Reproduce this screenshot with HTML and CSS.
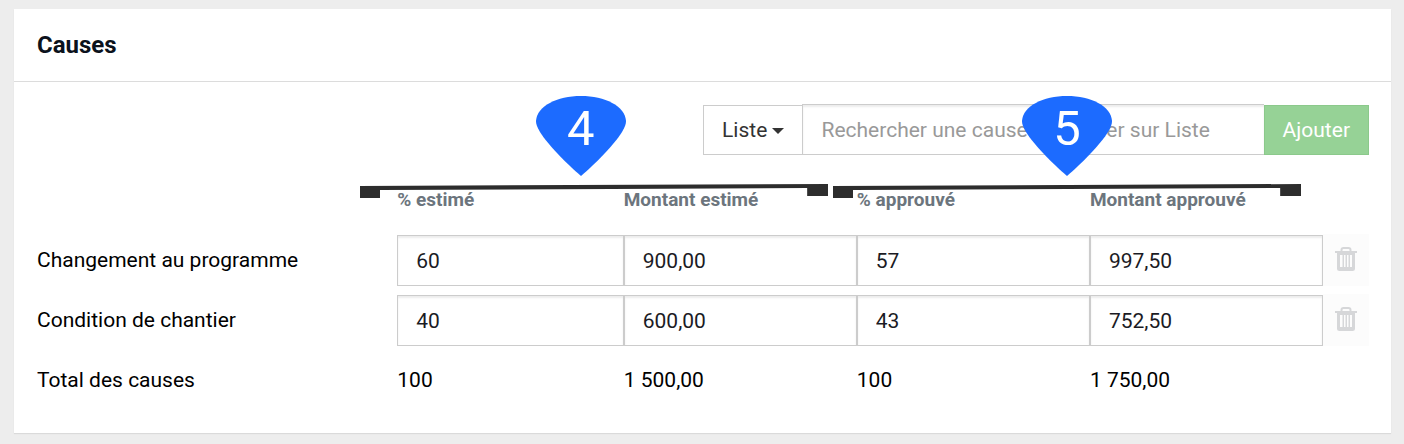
FILE: index.html
```
<!DOCTYPE html>
<html lang="fr">
<head>
    <meta charset="UTF-8">
    <meta name="viewport" content="width=device-width, initial-scale=1.0">
    <title>Causes</title>
    <link rel="stylesheet" href="styles.css">
</head>
<body>
    <svg width="0" height="0" class="sprite" aria-hidden="true">
        <symbol id="trash" viewBox="0 0 22 24">
            <path fill="none" stroke="currentColor" stroke-width="2" d="M6.5 5 V3 Q6.5 1 8.5 1 H13.5 Q15.5 1 15.5 3 V5"/>
            <path fill="currentColor" fill-rule="evenodd" d="M0 4 H22 V6 H20 V21.500 Q20 24 17.500 24 H4.500 Q2 24 2 21.500 V6 H0 Z M5 8 V20 H7.500 V8 Z M9 8 V20 H10.500 V8 Z M12 8 V20 H13.500 V8 Z M15 8 V20 H17 V8 Z"/>
        </symbol>
        <symbol id="pin" viewBox="0 0 90 80">
            <path fill="#1c6bff" d="M45 80 C32 69 12 49 4 36 C1 31 0 28 0 25 C1 10 21 0 45 0 C69 0 89 10 90 25 C90 28 89 31 86 36 C78 49 58 69 45 80 Z"/>
        </symbol>
        <symbol id="bracket" viewBox="0 0 468 14" preserveAspectRatio="none">
            <path fill="#2d2d2d" d="M0 2 L468 0 V12 H447 V4 L20 6 V14 H0 Z"/>
        </symbol>
    </svg>

    <section class="panel">
        <div class="panel-heading">
            <h2>Causes</h2>
        </div>

        <div class="panel-body">
            <div class="input-group">
                <button type="button" class="btn btn-default">Liste <span class="caret"></span></button>
                <input type="text" class="form-control" placeholder="Rechercher une cause ou cliquer sur Liste" aria-label="Rechercher une cause">
                <button type="button" class="btn btn-success">Ajouter</button>
            </div>

            <table class="causes">
                <thead>
                    <tr>
                        <th class="col-name"></th>
                        <th class="col-first" id="pe">% estimé</th>
                        <th class="col-value" id="me">Montant estimé</th>
                        <th class="col-value" id="pa">% approuvé</th>
                        <th class="col-value" id="ma">Montant approuvé</th>
                        <th class="col-action"></th>
                    </tr>
                </thead>
                <tbody>
                    <tr>
                        <td id="c1">Changement au programme</td>
                        <td><input type="text" class="form-control" value="60" aria-labelledby="c1 pe"></td>
                        <td><input type="text" class="form-control" value="900,00" aria-labelledby="c1 me"></td>
                        <td><input type="text" class="form-control" value="57" aria-labelledby="c1 pa"></td>
                        <td><input type="text" class="form-control" value="997,50" aria-labelledby="c1 ma"></td>
                        <td><button type="button" class="btn-delete" aria-label="Supprimer"><svg><use href="#trash"/></svg></button></td>
                    </tr>
                    <tr>
                        <td id="c2">Condition de chantier</td>
                        <td><input type="text" class="form-control" value="40" aria-labelledby="c2 pe"></td>
                        <td><input type="text" class="form-control" value="600,00" aria-labelledby="c2 me"></td>
                        <td><input type="text" class="form-control" value="43" aria-labelledby="c2 pa"></td>
                        <td><input type="text" class="form-control" value="752,50" aria-labelledby="c2 ma"></td>
                        <td><button type="button" class="btn-delete" aria-label="Supprimer"><svg><use href="#trash"/></svg></button></td>
                    </tr>
                </tbody>
                <tfoot>
                    <tr>
                        <td>Total des causes</td>
                        <td>100</td>
                        <td>1 500,00</td>
                        <td>100</td>
                        <td>1 750,00</td>
                        <td></td>
                    </tr>
                </tfoot>
            </table>

            <!-- annotations -->
            <svg class="bracket bracket-estimate"><use href="#bracket"/></svg>
            <svg class="bracket bracket-approved"><use href="#bracket"/></svg>
            <div class="pin pin-estimate"><svg><use href="#pin"/></svg><span>4</span></div>
            <div class="pin pin-approved"><svg><use href="#pin"/></svg><span>5</span></div>
        </div>
    </section>
</body>
</html>
```
FILE: styles.css
```
* {
    box-sizing: border-box;
}

body {
    margin: 0;
    padding: 9px 13px 10px 14px;
    background: #ededed;
    font-family: Roboto, sans-serif;
    font-size: 21px;
    line-height: 30px;
    color: #000;
}

.sprite {
    position: absolute;
}

.panel {
    background: #fff;
    box-shadow: 0 1px 1px rgba(0, 0, 0, 0.08);
}

.panel-heading {
    padding: 21px 23px;
    border-bottom: 1px solid #dcdcdc;
}

.panel-heading h2 {
    margin: 0;
    font-size: 24px;
    line-height: 30px;
    font-weight: 700;
    color: #0b121c;
}

.panel-body {
    position: relative;
    padding: 22px 22px 23px 23px;
}

.input-group {
    display: flex;
    align-items: flex-end;
    width: 50%;
    margin: 0 0 15px auto;
}

.btn {
    height: 50px;
    padding: 0 18px;
    border: 1px solid #ccc;
    background: #fff;
    font: inherit;
    white-space: nowrap;
}

.btn-default {
    border-right: 0;
    color: #333;
}

.btn-success {
    background: #96d296;
    border-color: #8bc98b;
    color: #fff;
}

.caret {
    display: inline-block;
    border-top: 6px solid #333;
    border-left: 6px solid transparent;
    border-right: 6px solid transparent;
    vertical-align: middle;
}

.form-control {
    display: block;
    width: 100%;
    height: 51px;
    padding: 1px 18px 0;
    border: 1px solid #ccc;
    border-radius: 0;
    background: #fff;
    box-shadow: inset 0 2px 2px rgba(0, 0, 0, 0.075);
    font: inherit;
    color: #1b1b24;
}

.input-group .form-control {
    flex: 1;
    min-width: 0;
    border-right: 0;
}

.form-control::placeholder {
    color: #999;
    opacity: 1;
}

.causes {
    width: 100%;
    table-layout: fixed;
    border-collapse: collapse;
}

.causes tr {
    height: 60px;
}

.causes th,
.causes td {
    padding: 0;
    text-align: left;
    vertical-align: middle;
}

.causes th {
    font-size: 19px;
    font-weight: 700;
    color: #6c757d;
}

/* the name column takes what is left */
.col-first {
    width: 17%;
}

.col-value {
    width: 17.5%;
}

.col-action {
    width: 46px;
}

.btn-delete {
    display: flex;
    align-items: center;
    justify-content: center;
    width: 100%;
    height: 52px;
    padding: 0 0 2px;
    border: 0;
    background: #fcfcfc;
    color: #d6d7d9;
}

.btn-delete svg {
    width: 22px;
    height: 24px;
}

.bracket {
    position: absolute;
    top: 102px;
    width: 34%;
    height: 14px;
}

.bracket-estimate {
    left: 25.1%;
}

.bracket-approved {
    left: 59.5%;
}

.pin {
    position: absolute;
    top: 14px;
    width: 90px;
    height: 80px;
    font-size: 49px;
    line-height: 66px;
    text-align: center;
    color: #fff;
}

.pin svg {
    position: absolute;
    inset: 0;
    width: 100%;
    height: 100%;
}

.pin span {
    position: relative;
}

.pin-estimate {
    left: 37.9%;
}

.pin-approved {
    left: 73.2%;
}
```
